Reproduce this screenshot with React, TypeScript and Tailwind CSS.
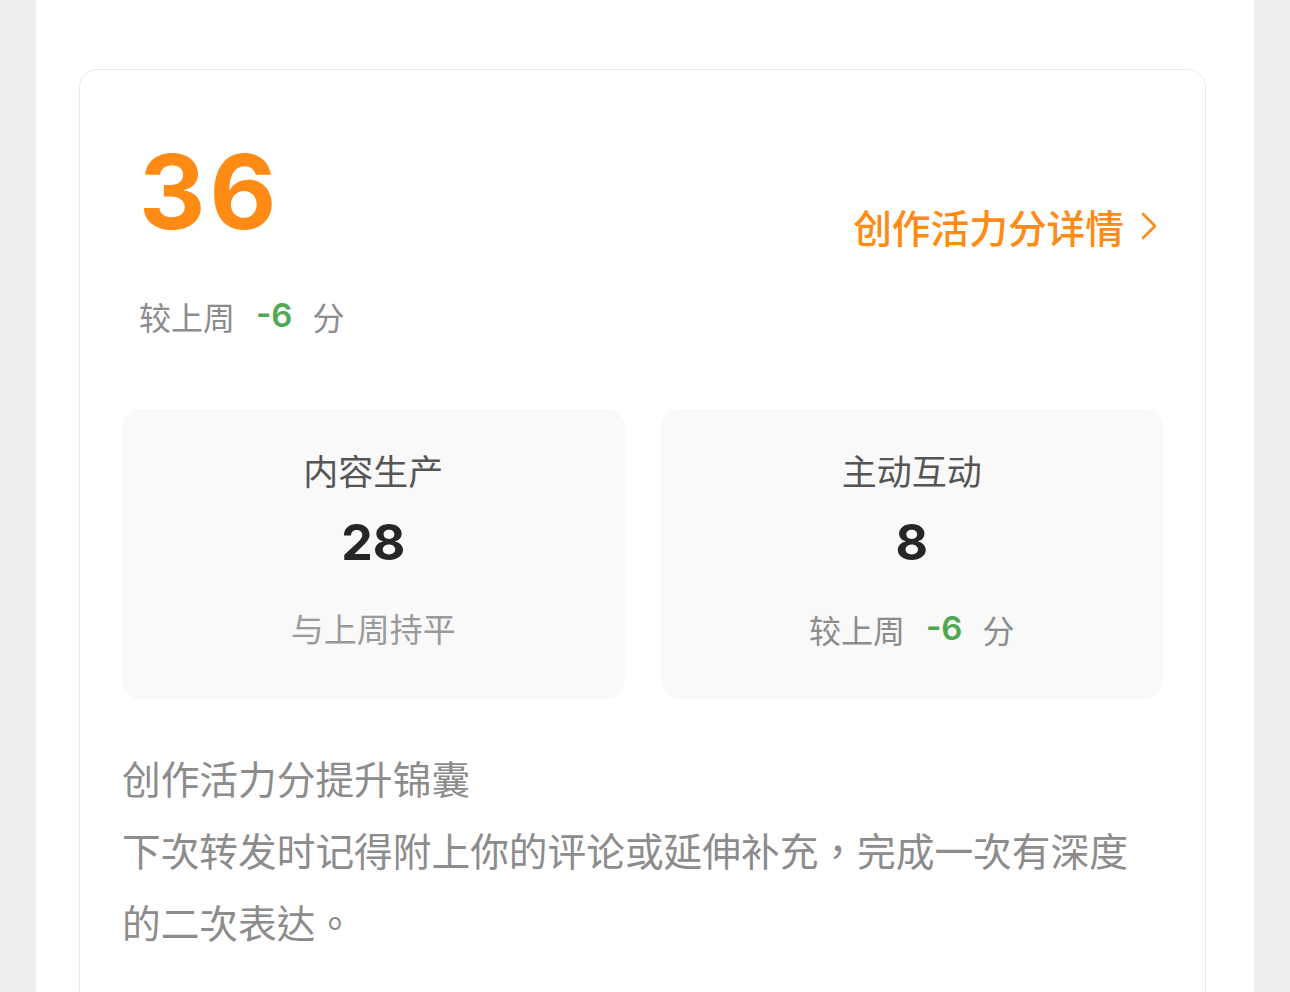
import React from "react";

const CJK = "font-['Noto_Sans_CJK_SC','Noto_Sans',sans-serif]";
const CJK_TC = "font-['Noto_Sans_CJK_TC','Noto_Sans_CJK_SC',sans-serif]";
const NUM = "font-['Inter','Noto_Sans_CJK_SC',sans-serif]";

function Chevron() {
  return (
    <svg width="18" height="30" viewBox="0 0 18 30" fill="none" className="ml-[16px]">
      <path d="M3 3 L15 15 L3 27" stroke="#ff8a14" strokeWidth="2.6" strokeLinecap="round" strokeLinejoin="round" />
    </svg>
  );
}

function Delta({ value }: { value: string }) {
  return (
    <div className={`flex items-center text-[32px] leading-[1.5] text-[#8c8c8c] ${CJK}`}>
      <span>较上周</span>
      <span className={`${NUM} font-semibold text-[33px] text-[#4fa852] ml-[21px] mr-[20px]`}>{value}</span>
      <span>分</span>
    </div>
  );
}

function StatBox({ title, value, children }: { title: string; value: string; children: React.ReactNode }) {
  return (
    <div className="flex-1 h-[290px] rounded-[18px] bg-[#f9f9f9] flex flex-col items-center pt-[35px]">
      <div className={`${CJK} text-[35px] leading-[1.5] text-[#555555]`}>{title}</div>
      <div className={`${NUM} font-bold text-[50px] leading-none text-[#262626] mt-[21px]`}>{value}</div>
      <div className="mt-[37px]">{children}</div>
    </div>
  );
}

export default function App() {
  return (
    <div className="h-[992px] overflow-hidden bg-[#ededed] flex">
      <div className="flex-1 mx-[36px] bg-white pt-[69px] pl-[43px] pr-[48px]">
        <div className="border border-[#ebebeb] rounded-[18px] h-[1000px] px-[42px] pt-[70px]">
          {/* score header */}
          <div className="flex justify-between items-start pl-[17px] pr-[5px]">
            <div className="flex flex-col">
              <div className={`${NUM} font-bold text-[103px] leading-none text-[#ff8a14] tracking-[4px]`}>36</div>
              <div className="mt-[48px]">
                <Delta value="-6" />
              </div>
            </div>
            <a className={`flex items-center mt-[57px] ${CJK} font-medium text-[38.7px] leading-[1.5] text-[#ff8a14]`}>
              创作活力分详情
              <Chevron />
            </a>
          </div>

          {/* breakdown */}
          <div className="flex gap-[36px] mt-[68px]">
            <StatBox title="内容生产" value="28">
              <div className={`${CJK} text-[33px] leading-[1.5] text-[#9a9a9a]`}>与上周持平</div>
            </StatBox>
            <StatBox title="主动互动" value="8">
              <Delta value="-6" />
            </StatBox>
          </div>

          {/* tips */}
          <div className="mt-[42px] text-[#8c8c8c] text-[38.7px] leading-[72px]">
            <div className={CJK}>创作活力分提升锦囊</div>
            <p className={CJK_TC}>下次转发时记得附上你的评论或延伸补充，完成一次有深度的二次表达。</p>
          </div>
        </div>
      </div>
    </div>
  );
}
